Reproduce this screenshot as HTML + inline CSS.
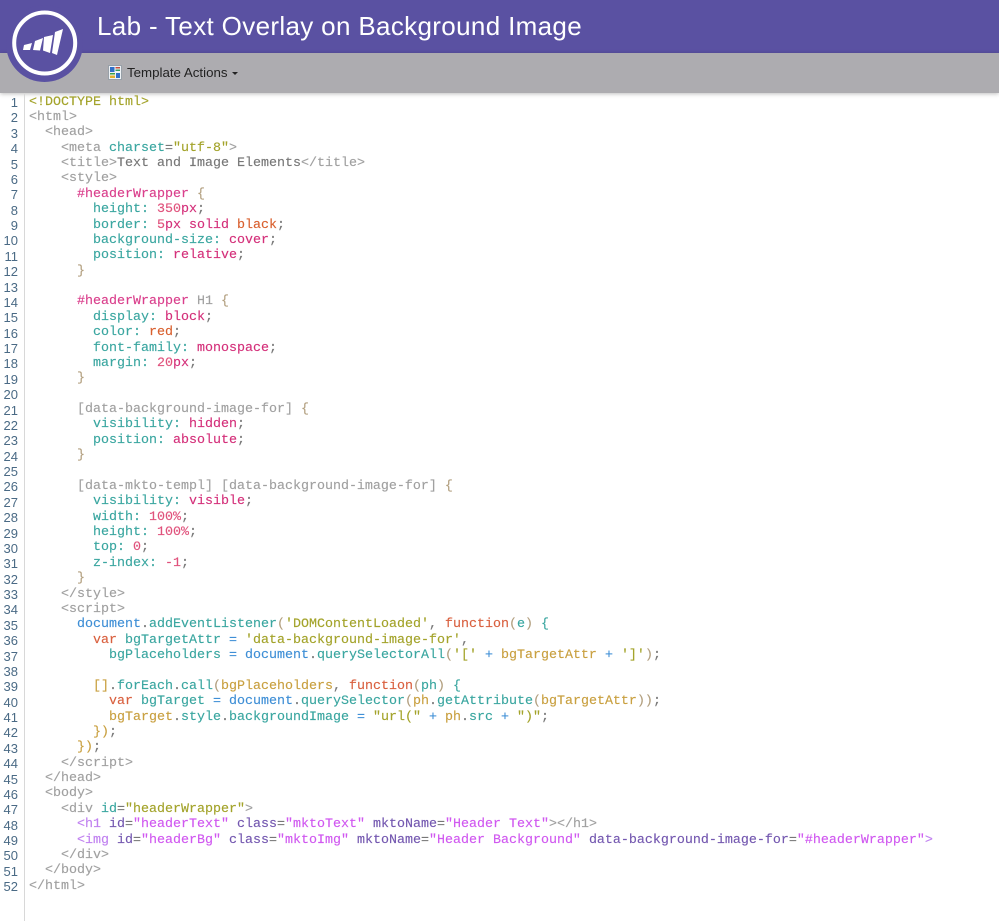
<!DOCTYPE html>
<html>
<head>
<meta charset="utf-8">
<title>Lab - Text Overlay on Background Image</title>
<style>
html,body{margin:0;padding:0;background:#fff;}
body{width:999px;height:921px;position:relative;overflow:hidden;font-family:"Liberation Sans",sans-serif;}
#top{position:absolute;left:0;top:0;width:999px;height:53px;background:#5a51a2;}
#bar{position:absolute;left:0;top:53px;width:999px;height:40px;background:#adacb0;box-shadow:0 1px 4px rgba(0,0,0,.25);}
#title{position:absolute;left:97px;top:11px;font-size:26px;letter-spacing:.34px;line-height:30px;color:#fff;white-space:nowrap;}
#logo{position:absolute;left:0;top:0;}
#ta{position:absolute;left:127px;top:65px;font-size:13.3px;line-height:16px;color:#222;white-space:nowrap;}
#caret{position:absolute;left:232px;top:72px;width:0;height:0;border-left:3px solid transparent;border-right:3px solid transparent;border-top:3px solid #222;}
#gut{position:absolute;left:24px;top:94px;width:1px;height:827px;background:#d8d8d8;}
#nums{position:absolute;left:0;top:95px;width:18px;text-align:right;font-family:"Liberation Sans",sans-serif;font-size:13px;line-height:15.373px;color:#4a6a85;margin:0;}
#code{position:absolute;left:29px;top:94.5px;margin:0;font-family:"Liberation Mono",monospace;font-size:13.33px;line-height:15.373px;color:#999;white-space:pre;-webkit-text-stroke:.15px currentColor;}
.o{color:#a3a32a}.t{color:#a0a0a0}.a{color:#3aa6a0}.s{color:#a3a32a}.d{color:#777}
.p{color:#da3f8c}.b{color:#b3a080}.v{color:#d4307a}.n{color:#e0527c}.r{color:#d9602f}
.j{color:#3f8fd6}.f{color:#d9603f}.y{color:#c9a040}.m{color:#3aa6a0}
.u{color:#c080f0}.w{color:#7458b0}.z{color:#d058f0}
</style>
</head>
<body>
<div id="top"></div>
<div id="bar"></div>
<svg id="logo" width="90" height="90" viewBox="0 0 90 90">
<circle cx="44.5" cy="43.5" r="38.500" fill="#5a51a2"/>
<circle cx="44.7" cy="43" r="30.500" fill="#5a51a2" stroke="#fff" stroke-width="4"/>
<path d="M24 45L32 43L30 50L23 50zM35 41L43 38L40 50.500L33 50zM44 37L53 35L50 53L43 50.500zM55 32L63 29L57 55L52 53z" fill="#fff"/>
</svg>
<div id="title">Lab - Text Overlay on Background Image</div>
<svg style="position:absolute;left:108px;top:65px" width="14" height="15" viewBox="0 0 14 15">
<rect x=".5" y=".5" width="13" height="14" fill="#eef2f6" stroke="#98a0a8"/>
<rect x="2" y="2" width="4.500" height="5" fill="#2f6fc8"/><rect x="7.500" y="2" width="4.500" height="1.500" fill="#c84a3a"/><rect x="7.500" y="4.500" width="4.500" height="1.500" fill="#3a9a5a"/>
<rect x="2" y="8" width="5" height="1.500" fill="#3aa04a"/><rect x="8" y="8" width="4" height="5" fill="#2f6fc8"/><rect x="2" y="10.500" width="5" height="2.500" fill="#e0b030"/>
</svg>
<div id="ta">Template Actions</div>
<div id="caret"></div>
<div id="gut"></div>
<pre id="nums">1
2
3
4
5
6
7
8
9
10
11
12
13
14
15
16
17
18
19
20
21
22
23
24
25
26
27
28
29
30
31
32
33
34
35
36
37
38
39
40
41
42
43
44
45
46
47
48
49
50
51
52</pre>
<pre id="code"><span class="o">&lt;!DOCTYPE html&gt;</span>
<span class="t">&lt;html&gt;</span>
  <span class="t">&lt;head&gt;</span>
    <span class="t">&lt;meta</span> <span class="a">charset</span><span class="d">=</span><span class="s">"utf-8"</span><span class="t">&gt;</span>
    <span class="t">&lt;title&gt;</span><span class="d">Text and Image Elements</span><span class="t">&lt;/title&gt;</span>
    <span class="t">&lt;style&gt;</span>
      <span class="p">#headerWrapper</span> <span class="b">{</span>
        <span class="a">height:</span> <span class="n">350</span><span class="v">px</span><span class="d">;</span>
        <span class="a">border:</span> <span class="n">5</span><span class="v">px solid</span> <span class="r">black</span><span class="d">;</span>
        <span class="a">background-size:</span> <span class="v">cover</span><span class="d">;</span>
        <span class="a">position:</span> <span class="v">relative</span><span class="d">;</span>
      <span class="b">}</span>

      <span class="p">#headerWrapper</span> <span class="t">H1</span> <span class="b">{</span>
        <span class="a">display:</span> <span class="v">block</span><span class="d">;</span>
        <span class="a">color:</span> <span class="r">red</span><span class="d">;</span>
        <span class="a">font-family:</span> <span class="v">monospace</span><span class="d">;</span>
        <span class="a">margin:</span> <span class="n">20</span><span class="v">px</span><span class="d">;</span>
      <span class="b">}</span>

      <span class="t">[data-background-image-for]</span> <span class="b">{</span>
        <span class="a">visibility:</span> <span class="v">hidden</span><span class="d">;</span>
        <span class="a">position:</span> <span class="v">absolute</span><span class="d">;</span>
      <span class="b">}</span>

      <span class="t">[data-mkto-templ] [data-background-image-for]</span> <span class="b">{</span>
        <span class="a">visibility:</span> <span class="v">visible</span><span class="d">;</span>
        <span class="a">width:</span> <span class="n">100%</span><span class="d">;</span>
        <span class="a">height:</span> <span class="n">100%</span><span class="d">;</span>
        <span class="a">top:</span> <span class="n">0</span><span class="d">;</span>
        <span class="a">z-index:</span> <span class="n">-1</span><span class="d">;</span>
      <span class="b">}</span>
    <span class="t">&lt;/style&gt;</span>
    <span class="t">&lt;script&gt;</span>
      <span class="j">document</span><span class="d">.</span><span class="m">addEventListener</span><span class="b">(</span><span class="s">'DOMContentLoaded'</span><span class="d">,</span> <span class="f">function</span><span class="b">(</span><span class="m">e</span><span class="b">)</span> <span class="m">{</span>
        <span class="f">var</span> <span class="m">bgTargetAttr</span> <span class="j">=</span> <span class="s">'data-background-image-for'</span><span class="d">,</span>
          <span class="m">bgPlaceholders</span> <span class="j">=</span> <span class="j">document</span><span class="d">.</span><span class="m">querySelectorAll</span><span class="b">(</span><span class="s">'['</span> <span class="j">+</span> <span class="y">bgTargetAttr</span> <span class="j">+</span> <span class="s">']'</span><span class="b">)</span><span class="d">;</span>

        <span class="y">[]</span><span class="d">.</span><span class="m">forEach</span><span class="d">.</span><span class="m">call</span><span class="b">(</span><span class="y">bgPlaceholders</span><span class="d">,</span> <span class="f">function</span><span class="b">(</span><span class="m">ph</span><span class="b">)</span> <span class="m">{</span>
          <span class="f">var</span> <span class="m">bgTarget</span> <span class="j">=</span> <span class="j">document</span><span class="d">.</span><span class="m">querySelector</span><span class="b">(</span><span class="y">ph</span><span class="d">.</span><span class="m">getAttribute</span><span class="b">(</span><span class="y">bgTargetAttr</span><span class="b">))</span><span class="d">;</span>
          <span class="y">bgTarget</span><span class="d">.</span><span class="m">style</span><span class="d">.</span><span class="m">backgroundImage</span> <span class="j">=</span> <span class="s">"url("</span> <span class="j">+</span> <span class="y">ph</span><span class="d">.</span><span class="m">src</span> <span class="j">+</span> <span class="s">")"</span><span class="d">;</span>
        <span class="y">})</span><span class="d">;</span>
      <span class="y">})</span><span class="d">;</span>
    <span class="t">&lt;/script&gt;</span>
  <span class="t">&lt;/head&gt;</span>
  <span class="t">&lt;body&gt;</span>
    <span class="t">&lt;div</span> <span class="a">id</span><span class="d">=</span><span class="s">"headerWrapper"</span><span class="t">&gt;</span>
      <span class="u">&lt;h1</span> <span class="w">id</span><span class="d">=</span><span class="z">"headerText"</span> <span class="w">class</span><span class="d">=</span><span class="z">"mktoText"</span> <span class="w">mktoName</span><span class="d">=</span><span class="z">"Header Text"</span><span class="t">&gt;&lt;/h1&gt;</span>
      <span class="u">&lt;img</span> <span class="w">id</span><span class="d">=</span><span class="z">"headerBg"</span> <span class="w">class</span><span class="d">=</span><span class="z">"mktoImg"</span> <span class="w">mktoName</span><span class="d">=</span><span class="z">"Header Background"</span> <span class="w">data-background-image-for</span><span class="d">=</span><span class="z">"#headerWrapper"</span><span class="u">&gt;</span>
    <span class="t">&lt;/div&gt;</span>
  <span class="t">&lt;/body&gt;</span>
<span class="t">&lt;/html&gt;</span></pre>
</body>
</html>
